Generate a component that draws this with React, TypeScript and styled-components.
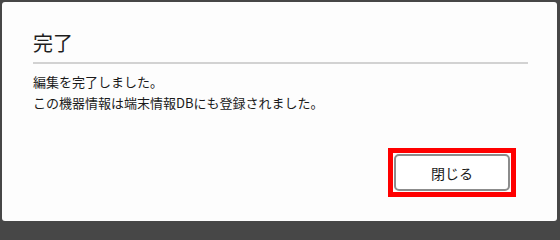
import React, { FC } from "react";
import styled, { createGlobalStyle } from "styled-components";

const GlobalStyle = createGlobalStyle`
  html, body {
    margin: 0;
    padding: 0;
    height: 224px;
    overflow: hidden;
    background: #474747;
  }
  body {
    font-family: "Noto Sans CJK JP", "Noto Sans", sans-serif;
  }
`;

const Dialog = styled.div`
  box-sizing: border-box;
  width: 555px;
  height: 219px;
  margin: 2px 0 0 2px;
  padding: 0 29px 0 31px;
  background: #fdfdfd;
  border-radius: 3px;
  display: flex;
  flex-direction: column;
`;

const Title = styled.h2`
  margin: 0;
  padding: 26px 0 4px 0;
  height: 30px;
  font-size: 20px;
  font-weight: 400;
  line-height: 30px;
  color: #1e1e1e;
  border-bottom: 2px solid #d2d2d2;
`;

const Message = styled.p`
  margin: 7px 0 0 0;
  font-size: 13px;
  line-height: 21px;
  color: #1a1a1a;
`;

const Footer = styled.div`
  margin-top: auto;
  margin-bottom: 24px;
  margin-right: 12px;
  display: flex;
  justify-content: flex-end;
`;

const Highlight = styled.div`
  border: 5px solid #ff0000;
  padding: 1px;
  display: flex;
`;

const Button = styled.button`
  box-sizing: border-box;
  width: 116px;
  height: 37px;
  border: 2px solid #8c8c8c;
  border-radius: 5px;
  background: #fff;
  font-family: "Noto Sans CJK JP", "Noto Sans", sans-serif;
  font-size: 14px;
  color: #1a1a1a;
  cursor: pointer;
`;

const App: FC = () => {
  return (
    <>
      <GlobalStyle />
      <Dialog>
        <Title>完了</Title>
        <Message>
          編集を完了しました。
          <br />
          この機器情報は端末情報DBにも登録されました。
        </Message>
        <Footer>
          <Highlight>
            <Button>閉じる</Button>
          </Highlight>
        </Footer>
      </Dialog>
    </>
  );
};

export default App;
